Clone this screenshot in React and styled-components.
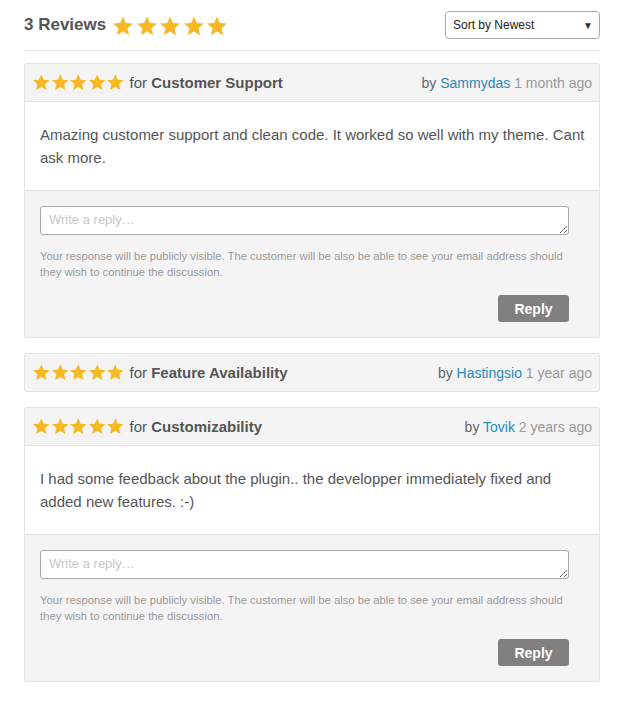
import React from "react";
import styled, { createGlobalStyle } from "styled-components";

const GlobalStyle = createGlobalStyle`
  body {
    margin: 0;
    background: #fff;
    font-family: "Liberation Sans", Arial, sans-serif;
    color: #555;
  }
`;

const Page = styled.div`
  width: 576px;
  padding: 11px 24px 20px 24px;
`;

const TopBar = styled.div`
  display: flex;
  align-items: center;
  justify-content: space-between;
  padding-bottom: 11px;
  border-bottom: 1px solid #e2e2e2;
  margin-bottom: 12px;
`;

const Title = styled.div`
  display: flex;
  align-items: center;
  gap: 6px;
  font-size: 17px;
  font-weight: bold;
  color: #555;
`;

const Stars = styled.span`
  display: inline-flex;
  gap: ${(p) => p.$gap}px;
  margin-top: ${(p) => p.$shift || 0}px;
`;

const SortSelect = styled.div`
  width: 140px;
  height: 26px;
  border: 1px solid #a9a9a9;
  border-radius: 4px;
  display: flex;
  align-items: center;
  justify-content: space-between;
  padding: 0 6px 0 7px;
  font-size: 12px;
  color: #222;
  box-sizing: content-box;
`;

const Arrow = styled.span`
  font-size: 10px;
  color: #333;
`;

const Card = styled.div`
  border: 1px solid #e1e4e8;
  border-radius: 3px;
  background: #f4f4f4;
  margin-bottom: 15px;
  overflow: hidden;
`;

const CardHead = styled.div`
  height: 37px;
  display: flex;
  align-items: center;
  justify-content: space-between;
  padding: 0 7px;
`;

const Topic = styled.div`
  display: flex;
  align-items: center;
  gap: 5px;
  font-size: 15px;
  color: #555;

  b {
    color: #555;
  }
`;

const Meta = styled.div`
  font-size: 14px;
  color: #666;
`;

const Author = styled.span`
  color: #2a8ab7;
`;

const Ago = styled.span`
  color: #999;
`;

const Body = styled.div`
  background: #fff;
  border-top: 1px solid #e1e4e8;
  border-bottom: 1px solid #e1e4e8;
  padding: 21px 10px 21px 15px;
  font-size: 15px;
  line-height: 23px;
  color: #555;
`;

const ReplyBox = styled.div`
  padding: 15px 30px 15px 15px;
  display: flex;
  flex-direction: column;
`;

const ReplyInput = styled.textarea`
  display: block;
  width: 100%;
  height: 29px;
  box-sizing: border-box;
  border: 1px solid #a9a9a9;
  border-radius: 3px;
  padding: 5px 8px;
  font-family: "Liberation Sans", Arial, sans-serif;
  font-size: 13px;
  color: #555;
  background: #fff;
  resize: vertical;
  margin: 0;

  &::placeholder {
    color: #c8c8c8;
  }
`;

const Note = styled.p`
  margin: 13px 0 0 0;
  font-size: 11.25px;
  line-height: 16px;
  color: #999;
`;

const ReplyButton = styled.button`
  align-self: flex-end;
  margin-top: 15px;
  width: 71px;
  height: 27px;
  border: none;
  border-radius: 3px;
  background: #808080;
  color: #fff;
  font-family: "Liberation Sans", Arial, sans-serif;
  font-size: 14px;
  font-weight: bold;
  cursor: pointer;
`;

const Star = ({ size }) => (
  <svg width={size} height={size} viewBox="0 0 24 24">
    <path
      d="M12 1.5l3.1 7.1 7.7.7-5.8 5.1 1.7 7.6L12 18l-6.7 4 1.7-7.6-5.8-5.1 7.7-.7z"
      fill="#f6b923"
    />
  </svg>
);

const FiveStars = ({ size, gap, shift }) => (
  <Stars $gap={gap} $shift={shift}>
    {[0, 1, 2, 3, 4].map((i) => (
      <Star key={i} size={size} />
    ))}
  </Stars>
);

const reviews = [
  {
    id: 1,
    topic: "Customer Support",
    author: "Sammydas",
    ago: "1 month ago",
    text: "Amazing customer support and clean code. It worked so well with my theme. Cant ask more.",
  },
  {
    id: 2,
    topic: "Feature Availability",
    author: "Hastingsio",
    ago: "1 year ago",
  },
  {
    id: 3,
    topic: "Customizability",
    author: "Tovik",
    ago: "2 years ago",
    text: "I had some feedback about the plugin.. the developper immediately fixed and added new features. :-)",
  },
];

const App = () => {
  return (
    <Page>
      <GlobalStyle />
      <TopBar>
        <Title>
          3 Reviews
          <FiveStars size={22} gap={1.5} shift={2} />
        </Title>
        <SortSelect>
          Sort by Newest
          <Arrow>▼</Arrow>
        </SortSelect>
      </TopBar>

      {reviews.map((review) => (
        <Card key={review.id}>
          <CardHead>
            <Topic>
              <FiveStars size={18.5} gap={0} />
              <span>
                for <b>{review.topic}</b>
              </span>
            </Topic>
            <Meta>
              by <Author>{review.author}</Author> <Ago>{review.ago}</Ago>
            </Meta>
          </CardHead>
          {review.text && (
            <>
              <Body>{review.text}</Body>
              <ReplyBox>
                <ReplyInput placeholder="Write a reply…" />
                <Note>
                  Your response will be publicly visible. The customer will be also be able to see
                  your email address should they wish to continue the discussion.
                </Note>
                <ReplyButton>Reply</ReplyButton>
              </ReplyBox>
            </>
          )}
        </Card>
      ))}
    </Page>
  );
};

export default App;
